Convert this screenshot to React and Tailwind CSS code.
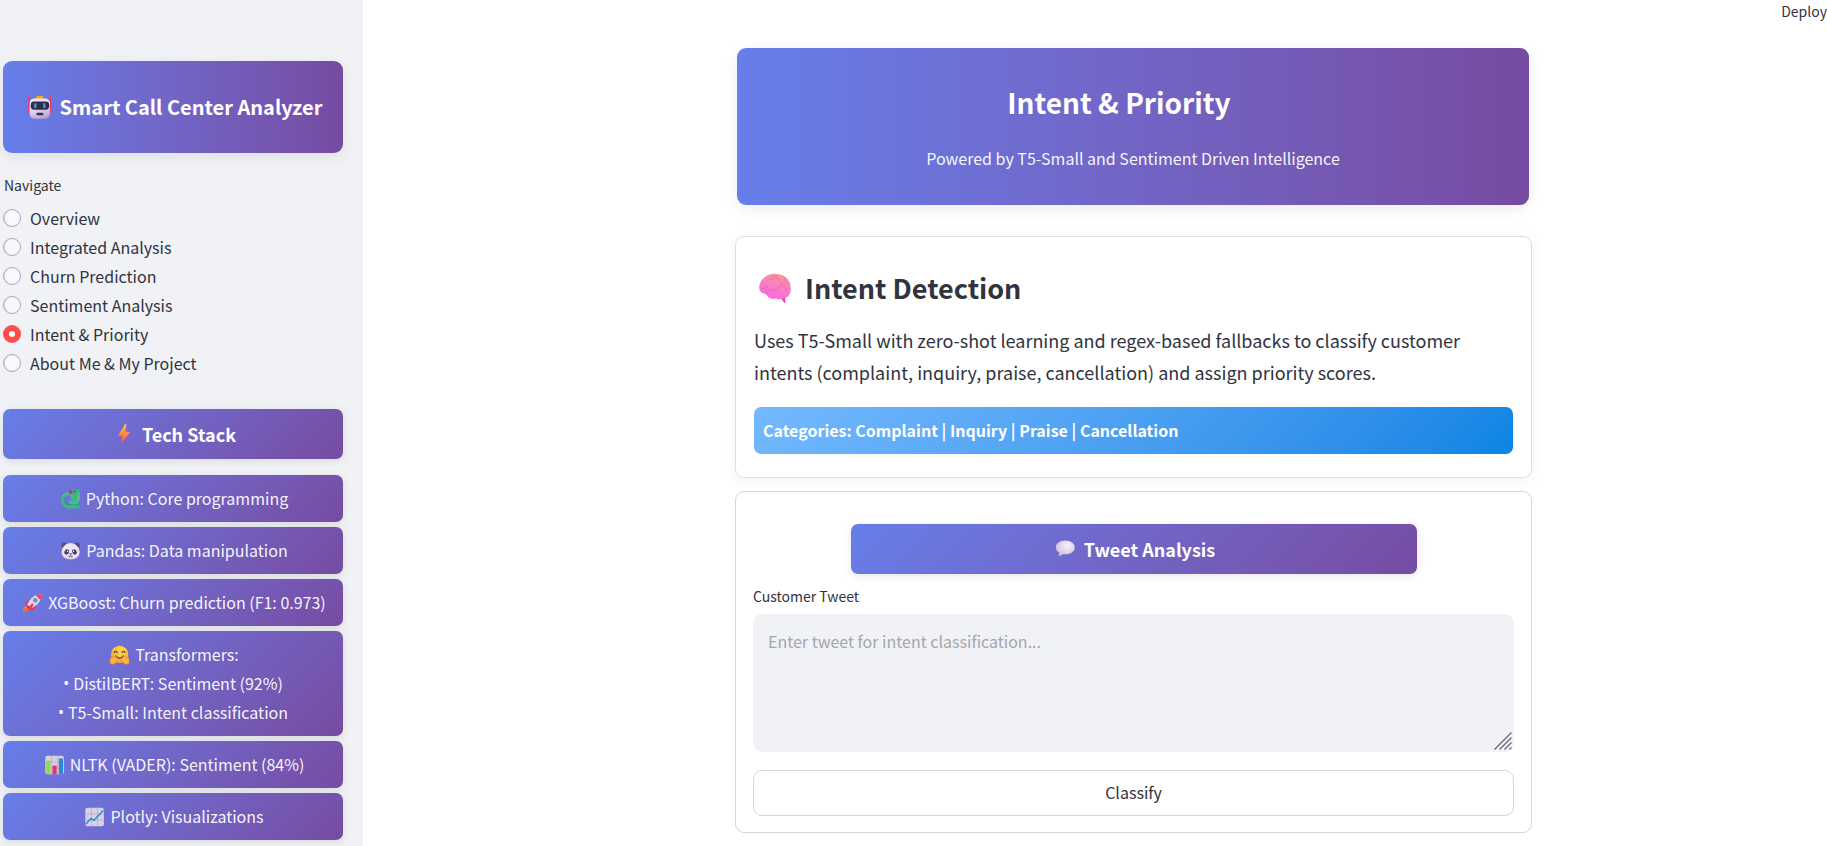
import React, { useState } from "react";

function Emoji({ className, children }) {
  return (
    <svg viewBox="-5 -4 40 40" className={`shrink-0 ${className}`} aria-hidden="true">
      {children}
    </svg>
  );
}

function Robot() {
  return (
    <Emoji className="size-[30px]">
      <defs>
        <linearGradient id="robotFace" x1="0.300" y1="0" x2="0.600" y2="1">
          <stop offset="0" stopColor="#f1e9f6" />
          <stop offset="0.600" stopColor="#dccfe8" />
          <stop offset="1" stopColor="#b89fd4" />
        </linearGradient>
      </defs>
      <circle cx="1.700" cy="1.500" r="1.700" fill="#f8506b" />
      <circle cx="30.300" cy="1.500" r="1.700" fill="#f8506b" />
      <rect x="1" y="2" width="1.400" height="14" fill="#e8365c" />
      <rect x="29.600" y="2" width="1.400" height="14" fill="#e8365c" />
      <rect x="0.500" y="12" width="3.500" height="12" rx="1.700" fill="#ef3a62" />
      <rect x="28" y="12" width="3.500" height="12" rx="1.700" fill="#ef3a62" />
      <path d="M11 4c0-2 1-3 3-3h4c2 0 3 1 3 3v2H11z" fill="#f5a623" />
      <rect x="2.500" y="4.500" width="27" height="27" rx="6.500" fill="url(#robotFace)" />
      <rect x="4" y="8.500" width="24.500" height="11" rx="4.500" fill="#352b47" />
      <rect x="8.500" y="11" width="3.200" height="6.500" rx="1" fill="#259fe0" />
      <rect x="20.500" y="11" width="3.200" height="6.500" rx="1" fill="#259fe0" />
      <rect x="11.500" y="23.500" width="9.500" height="3.500" rx="1.700" fill="#3b2f4e" />
    </Emoji>
  );
}

function Bolt() {
  return (
    <Emoji className="size-[26px]">
      <defs>
        <linearGradient id="boltFill" x1="0" y1="0" x2="0" y2="1">
          <stop offset="0" stopColor="#ffb83d" />
          <stop offset="0.500" stopColor="#ff8a4a" />
          <stop offset="1" stopColor="#f04a5e" />
        </linearGradient>
      </defs>
      <path d="M17.500 1.500 8 17.200c-.5.800 0 1.400.8 1.400h5L11.500 30c-.2 1 .7 1.300 1.300.5L25 14.200c.6-.8.200-1.600-.8-1.600h-5.400l1.700-10.400c.2-1.300-2-2.200-3-.7z" fill="url(#boltFill)" />
    </Emoji>
  );
}

function Snake() {
  return (
    <Emoji className="size-6">
      <path d="M31 29H14C6 29 3 23 3 17.500S6 8 11.500 8s8 3.500 8 8.500v1.500c0 3.500 4 3.500 4 0V5" fill="none" stroke="#3fb58a" strokeWidth="5.500" strokeLinejoin="round" />
      <path d="M17 2.500C18 0 20 0 22 0h9v9h-8c-4 0-6-3-6-6.500z" fill="#35b98a" />
      <path d="M28 8v9c0 5-3 7.500-7 7.500s-6-2-6-5.500" fill="none" stroke="#45bd8d" strokeWidth="5" />
      <path d="M30 6v13M2.500 11.500l4-4.500 5-1.500" fill="none" stroke="#d8d834" strokeWidth="1.500" strokeDasharray="2 2.500" />
      <path d="m13 3 3 0 2.500 2-3 1-1 2" fill="none" stroke="#d91f43" strokeWidth="2" />
      <circle cx="23" cy="3" r="1.200" fill="#232b37" />
      <path d="M6 13c-2 5 0 10.500 6 12.500h18" fill="none" stroke="#2c9780" strokeWidth="1.400" />
    </Emoji>
  );
}

function Panda() {
  return (
    <Emoji className="size-6">
      <circle cx="5.500" cy="6.500" r="4.800" fill="#5b4d74" />
      <circle cx="26.500" cy="6.500" r="4.800" fill="#5b4d74" />
      <path d="M16 3C8 3 1 10 1 18.500 1 26 8 30 16 30s15-4 15-11.500C31 10 24 3 16 3z" fill="#d9cbe6" />
      <path d="M16 3C8 3 1.500 10 1.500 17.500 1.500 24 8 27.500 16 27.500s14.500-3.500 14.500-10C30.500 10 24 3 16 3z" fill="#ece3f3" />
      <ellipse cx="9.500" cy="17.500" rx="3.600" ry="4.600" transform="rotate(28 9.500 17.500)" fill="#4b3d5e" />
      <ellipse cx="22.500" cy="17.500" rx="3.600" ry="4.600" transform="rotate(-28 22.500 17.500)" fill="#4b3d5e" />
      <circle cx="11" cy="16.500" r="1.200" fill="#fff" />
      <circle cx="21" cy="16.500" r="1.200" fill="#fff" />
      <path d="M13.500 20h5L16 22.800z" fill="#2e2439" />
      <path d="M12.500 24.500c1.500 1.300 2.700 1 3.500-.7.800 1.700 2 2 3.500.7" fill="none" stroke="#2e2439" strokeWidth="1.500" />
    </Emoji>
  );
}

function Rocket() {
  return (
    <Emoji className="size-6">
      <path d="M8 20 1 24v6l7-1 4-4z" fill="#ff9a2e" />
      <path d="m2 24 5-1 3 3-3 4-6 1z" fill="#fb6b21" />
      <path d="M12 10c-4 0-8 4-9.500 9.500L10 18z" fill="#e8365f" />
      <path d="M22 20c0 4-4 8-9.500 9.500L14 22z" fill="#e8365f" />
      <path d="M30.500 1.500C20 1 12 7 7 19l6 6c12-5 18-13 17.500-23.500z" fill="#dfd4ea" />
      <path d="M30.500 1.500c-3.500-.2-6.500.3-9.300 1.500l7.800 7.800c1.200-2.800 1.700-5.800 1.500-9.300z" fill="#f23b5d" />
      <circle cx="20.500" cy="11.500" r="3.800" fill="#8c7aa5" />
      <circle cx="20.500" cy="11.500" r="2.600" fill="#38b6f1" />
      <path d="m7 19 6 6-3 1-4-4z" fill="#a12c66" />
      <path d="m15.500 16.500-6 6-1 5 5-1 4-8z" fill="#f0315c" />
    </Emoji>
  );
}

function Hugging() {
  return (
    <Emoji className="size-6">
      <defs>
        <radialGradient id="hugFace" cx="0.600" cy="0.300" r="0.800">
          <stop offset="0" stopColor="#ffe34f" />
          <stop offset="1" stopColor="#f79a2f" />
        </radialGradient>
      </defs>
      <circle cx="16" cy="15" r="14.500" fill="url(#hugFace)" />
      <path d="M7 12c1-3 4-3 5 0M20 12c1-3 4-3 5 0" fill="none" stroke="#46304f" strokeWidth="2" strokeLinecap="round" />
      <path d="M10 17.500c2.500 5 9.500 5 12 0" fill="none" stroke="#5a2e3c" strokeWidth="2" strokeLinecap="round" />
      <path d="M1 20c1-1.500 2.500 0 3 1.500l1-2.500c1-1.500 2.700-.8 2.500 1l2-1c1.500-.5 2.500 1 1.300 2.300l1.700.2c1.500.5 1.500 2 .5 3C11 28 9 31.500 4.500 31.500S-.5 28 0 25z" fill="#ffb43c" stroke="#e8783a" strokeWidth="0.900" />
      <path d="M31 20c-1-1.500-2.500 0-3 1.500L27 19c-1-1.500-2.700-.8-2.500 1l-2-1c-1.500-.5-2.500 1-1.300 2.300l-1.700.2c-1.500.5-1.500 2-.5 3 2 3.500 4 7 8.500 7s5-3.500 4.500-6.500z" fill="#ffb43c" stroke="#e8783a" strokeWidth="0.900" />
    </Emoji>
  );
}

function ChartSheet({ children }) {
  return (
    <Emoji className="size-6">
      <rect x="0.500" y="0.500" width="31" height="31" rx="3.500" fill="#d9d0e3" />
      <path d="M1 11h30M1 21h30M11 1v30M21 1v30" stroke="#b5a6c6" strokeWidth="1.200" />
      {children}
    </Emoji>
  );
}

function BarChart() {
  return (
    <ChartSheet>
      <path d="M2 9h7v22.500H4a2 2 0 0 1-2-2z" fill="#8bdc52" />
      <path d="M12.500 17h7v14.500h-7z" fill="#e0346f" />
      <path d="M23 5h7v24.500a2 2 0 0 1-2 2h-5z" fill="#2f86d6" />
    </ChartSheet>
  );
}

function LineChart() {
  return (
    <ChartSheet>
      <path d="m2 27 8-8.500 5 3L30 5.500" fill="none" stroke="#2c8fd8" strokeWidth="2.600" strokeLinecap="round" strokeLinejoin="round" />
    </ChartSheet>
  );
}

function Brain() {
  return (
    <Emoji className="size-10">
      <defs>
        <linearGradient id="brainFill" x1="0.700" y1="0" x2="0.400" y2="1">
          <stop offset="0" stopColor="#fb979c" />
          <stop offset="0.500" stopColor="#f77fc4" />
          <stop offset="1" stopColor="#ff66e4" />
        </linearGradient>
      </defs>
      <path d="M21 25l4 5.500c.5.700 1.500.3 1.400-.6L26 24z" fill="#f23cb8" />
      <path d="M17 2C10 1 2 6 .5 13c-1 4 .5 8 4.500 8.800 1 0 2 .2 2.500 1.200C9 26 13 27.500 17 26.500c2 1 5 1 7.500 0 5-.5 7.500-5 7.300-10.500C31.500 7 25 2 17 2z" fill="url(#brainFill)" />
      <path d="M9 6c2 2 5 1.500 6.500 0M14 4c3 0 5 1.500 6 4M25 5.500c.5 3 2 5 4.500 6M2 16c3 1 5 0 7-1.500M8 21.500c0-3 3-4 6-3.500 3 .3 4-3 8-3.500M22 10c0 2 1.500 4 4 4.500 1.500 1 2 3 1 5" fill="none" stroke="#dc5f9c" strokeOpacity="0.700" strokeWidth="0.900" strokeLinecap="round" />
    </Emoji>
  );
}

function Bubble() {
  return (
    <Emoji className="size-[26px]">
      <defs>
        <radialGradient id="bubbleFill" cx="0.600" cy="0.350" r="0.700">
          <stop offset="0" stopColor="#f8f2fb" />
          <stop offset="1" stopColor="#cfbbd9" />
        </radialGradient>
      </defs>
      <path d="M15.500 3C7 3 1 7.500 1 13.500c0 3.500 2 6 5 7.800.3 1.500 0 2.800-.8 4-.4.800.1 1.400 1 1.200 2.500-.5 4.300-1.500 5.800-2.900 1 .2 2.300.4 3.500.4 8.500 0 14.500-4.500 14.500-10.500S24 3 15.500 3z" fill="url(#bubbleFill)" />
    </Emoji>
  );
}

const pages = [
  "Overview",
  "Integrated Analysis",
  "Churn Prediction",
  "Sentiment Analysis",
  "Intent & Priority",
  "About Me & My Project",
];

const stack = [
  { icon: <Snake />, title: "Python: Core programming" },
  { icon: <Panda />, title: "Pandas: Data manipulation" },
  { icon: <Rocket />, title: "XGBoost: Churn prediction (F1: 0.973)" },
  {
    icon: <Hugging />,
    title: "Transformers:",
    points: ["DistilBERT: Sentiment (92%)", "T5-Small: Intent classification"],
  },
  { icon: <BarChart />, title: "NLTK (VADER): Sentiment (84%)" },
  { icon: <LineChart />, title: "Plotly: Visualizations" },
];

function Sidebar() {
  const [page, setPage] = useState("Intent & Priority");
  return (
    <aside className="w-[363px] shrink-0 bg-[#f0f2f6] pt-[61px] pr-5 pl-[3px]">
      <div className="flex h-[92px] items-center justify-center gap-[6px] rounded-[9px] bg-linear-to-r from-[#667eea] to-[#764ba2] text-white shadow-[0_4px_14px_rgba(0,0,0,0.08)]">
        <Robot />
        <h2 className="text-[20px] leading-7 font-semibold whitespace-nowrap">Smart Call Center Analyzer</h2>
      </div>

      <fieldset className="mt-5">
        <legend className="float-left w-full pl-px text-[14px] leading-6">Navigate</legend>
        <div className="clear-both pt-[6px]">
          {pages.map((name) => (
            <label key={name} className="flex h-[29px] cursor-pointer items-center gap-[9px] text-[16px]">
              <input
                type="radio"
                name="page"
                checked={page === name}
                onChange={() => setPage(name)}
                className="size-[18px] shrink-0 appearance-none rounded-full border border-[#a8aab4] bg-[#f9f9fb] shadow-[inset_1px_0_0_rgba(49,51,63,0.15)] checked:border-6 checked:border-[#ff4b4b] checked:bg-white checked:shadow-none"
              />
              {name}
            </label>
          ))}
        </div>
      </fieldset>

      <div className="mt-8 flex h-[50px] items-center justify-center gap-[6px] rounded-[7px] bg-linear-135 from-[#667eea] to-[#764ba2] text-white shadow-[0_2px_9px_rgba(0,0,0,0.1)]">
        <Bolt />
        <h3 className="text-[18px] leading-7 font-bold">Tech Stack</h3>
      </div>

      <ul className="mt-4 flex flex-col gap-[5px]">
        {stack.map((item) => (
          <li
            key={item.title}
            className="rounded-[7px] bg-linear-135 from-[#667eea] to-[#764ba2] py-[9px] text-center text-[16px] leading-[29px] whitespace-nowrap text-white/95 shadow-[0_2px_9px_rgba(0,0,0,0.1)]"
          >
            <div className="flex items-center justify-center gap-1">
              {item.icon}
              {item.title}
            </div>
            {item.points?.map((point) => (
              <p key={point} className="flex items-center justify-center gap-1">
                <span className="font-['Noto_Sans',sans-serif]">•</span>
                {point}
              </p>
            ))}
          </li>
        ))}
      </ul>
    </aside>
  );
}

function ResizeGrip() {
  return (
    <svg viewBox="0 0 18 18" className="pointer-events-none absolute right-[2px] bottom-[2px] size-[18px]" aria-hidden="true">
      <path d="M0.500 17.500 17.500 0.500M5.500 17.500l12-12M10.500 17.500l7-7M15.500 17.500l2-2" stroke="#666970" strokeWidth="1.300" />
    </svg>
  );
}

export default function App() {
  return (
    <div
      className="flex min-h-screen bg-white text-[#31333f]"
      style={{ fontFamily: '"Noto Sans CJK SC", "Noto Sans", sans-serif' }}
    >
      <Sidebar />
      <div className="flex min-w-0 flex-1 flex-col">
        <header className="flex h-6 justify-end">
          <button type="button" className="self-start text-[14px] leading-[22px]">Deploy</button>
        </header>

        <main className="flex justify-center pt-6 pl-[77px]">
          <div className="w-full max-w-[797px]">
            <div className="mr-[3px] ml-[2px] flex h-[157px] flex-col items-center gap-[22px] rounded-[9px] bg-linear-to-r from-[#667eea] to-[#764ba2] pt-[34px] text-white shadow-[0_4px_14px_rgba(0,0,0,0.08)]">
              <h1 className="pr-7 text-[28px] leading-10 font-bold">Intent &amp; Priority</h1>
              <p className="text-[16px] leading-[29px] text-white/95">Powered by T5-Small and Sentiment Driven Intelligence</p>
            </div>

            <section className="mt-[31px] rounded-[9px] border border-[#dddee0] px-[18px] pt-[31px] pb-[23px] shadow-[0_2px_14px_rgba(0,0,0,0.06)]">
              <div className="flex items-center gap-[11px]">
                <Brain />
                <h2 className="text-[27px] leading-10 font-semibold">Intent Detection</h2>
              </div>
              <p className="mt-4 text-[18px] leading-8">
                Uses T5-Small with zero-shot learning and regex-based fallbacks to classify customer intents (complaint,
                inquiry, praise, cancellation) and assign priority scores.
              </p>
              <p className="mt-[19px] rounded-[7px] bg-linear-135 from-[#74b9ff] to-[#0984e3] px-[9px] py-[9px] text-[16px] leading-[29px] font-semibold text-white">
                Categories: Complaint | Inquiry | Praise | Cancellation
              </p>
            </section>

            <form
              className="mt-[13px] rounded-[9px] border border-[#d6d6d9] px-[17px] pt-8 pb-4"
              onSubmit={(event) => event.preventDefault()}
            >
              <div className="mx-auto flex h-[50px] w-[566px] max-w-full items-center justify-center gap-[6px] rounded-[7px] bg-linear-135 from-[#667eea] to-[#764ba2] text-white shadow-[0_2px_9px_rgba(0,0,0,0.1)]">
                <Bubble />
                <h3 className="text-[18px] leading-7 font-bold">Tweet Analysis</h3>
              </div>
              <label htmlFor="tweet" className="mt-[10px] block text-[14px] leading-6">Customer Tweet</label>
              <div className="relative mt-[6px] h-[138px]">
                <textarea
                  id="tweet"
                  placeholder="Enter tweet for intent classification..."
                  className="block size-full resize-none rounded-[9px] bg-[#f0f2f6] px-[15px] py-[13px] text-[16px] leading-[29px] placeholder:text-[#a5a6ab]"
                />
                <ResizeGrip />
              </div>
              <button type="submit" className="mt-[18px] block h-[46px] w-full rounded-[9px] border border-[#d6d6d9] bg-white pb-[2px] text-[16px]">
                Classify
              </button>
            </form>
          </div>
        </main>
      </div>
    </div>
  );
}
